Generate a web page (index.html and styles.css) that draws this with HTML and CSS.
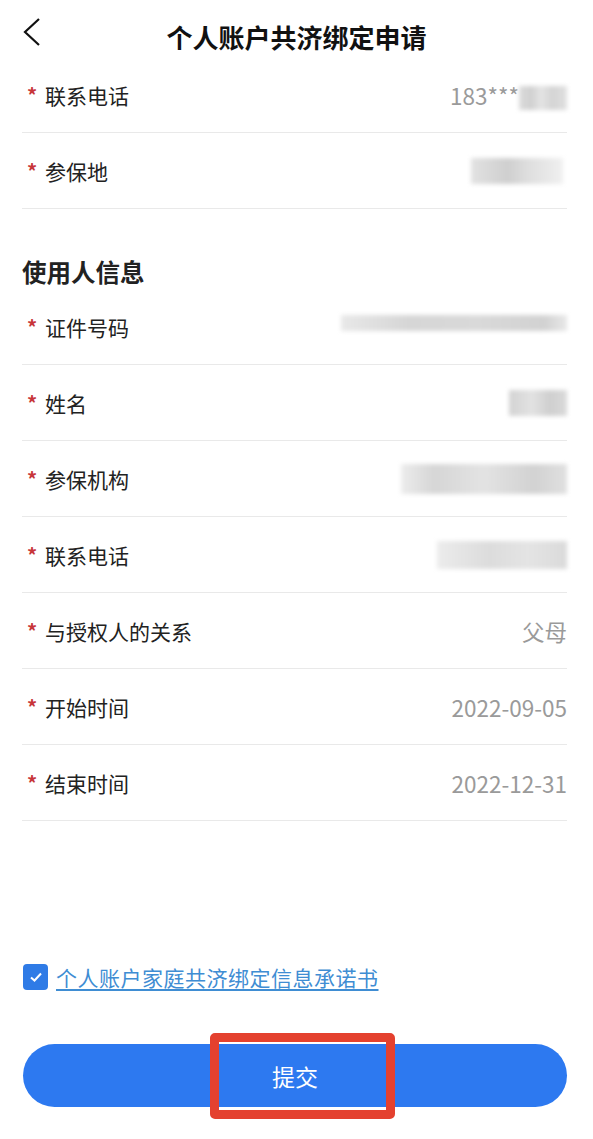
FILE: index.html
```html
<!DOCTYPE html>
<html lang="zh-CN">
<head>
    <meta charset="UTF-8">
    <meta name="viewport" content="width=device-width, initial-scale=1.0">
    <title>个人账户共济绑定申请</title>
    <link rel="stylesheet" href="styles.css">
</head>
<body>
    <div class="page">
        <div class="header">
            <svg class="back" width="20" height="30" viewBox="0 0 20 30">
                <path d="M17 2 L3 15 L17 28" fill="none" stroke="#111" stroke-width="2.2"/>
            </svg>
            <h1 class="title">个人账户共济绑定申请</h1>
        </div>

        <ul class="form">
            <li class="row">
                <span class="label"><i>*</i>联系电话</span>
                <span class="value">183***<b class="mosaic m-phone"></b></span>
            </li>
            <li class="row">
                <span class="label"><i>*</i>参保地</span>
                <span class="value"><b class="mosaic m-place"></b></span>
            </li>
        </ul>

        <h2 class="section">使用人信息</h2>

        <ul class="form">
            <li class="row">
                <span class="label"><i>*</i>证件号码</span>
                <span class="value"><b class="mosaic m-id"></b></span>
            </li>
            <li class="row">
                <span class="label"><i>*</i>姓名</span>
                <span class="value"><b class="mosaic m-name"></b></span>
            </li>
            <li class="row">
                <span class="label"><i>*</i>参保机构</span>
                <span class="value"><b class="mosaic m-org"></b></span>
            </li>
            <li class="row">
                <span class="label"><i>*</i>联系电话</span>
                <span class="value"><b class="mosaic m-tel"></b></span>
            </li>
            <li class="row">
                <span class="label"><i>*</i>与授权人的关系</span>
                <span class="value">父母</span>
            </li>
            <li class="row">
                <span class="label"><i>*</i>开始时间</span>
                <span class="value">2022-09-05</span>
            </li>
            <li class="row">
                <span class="label"><i>*</i>结束时间</span>
                <span class="value">2022-12-31</span>
            </li>
        </ul>

        <div class="agree">
            <span class="checkbox">
                <svg width="14" height="12" viewBox="0 0 14 12">
                    <path d="M2 6.5 L5.5 9.5 L12 2.5" fill="none" stroke="#fff" stroke-width="2"/>
                </svg>
            </span>
            <a class="agree-link" href="#">个人账户家庭共济绑定信息承诺书</a>
        </div>

        <div class="submit-wrap">
            <button class="submit">提交</button>
            <div class="mark"></div>
        </div>
    </div>
</body>
</html>
```

FILE: styles.css
```css
body {
    margin: 0;
    background: #fff;
    font-family: "Noto Sans CJK SC", "Noto Sans", sans-serif;
    color: #222;
}

.page {
    width: 593px;
    padding: 0 26px 32px 22px;
    box-sizing: border-box;
}

.header {
    position: relative;
    height: 57px;
    padding-top: 16px;
    box-sizing: border-box;
}

.back {
    position: absolute;
    left: 0;
    top: 17px;
}

.title {
    margin: 0;
    text-align: center;
    font-size: 26px;
    line-height: 41px;
    font-weight: bold;
    color: #111;
    margin-left: 4px;
}

ul.form {
    list-style: none;
    margin: 0;
    padding: 0;
}

.row {
    display: flex;
    align-items: center;
    justify-content: space-between;
    height: 75px;
    border-bottom: 1.5px solid #e9e9e9;
    padding-left: 5px;
}

.label {
    font-size: 21px;
    color: #222;
    display: flex;
    align-items: center;
}

.label i {
    font-style: normal;
    font-weight: bold;
    color: #c7363a;
    font-size: 20px;
    width: 18px;
    margin-top: -1px;
}

.value {
    font-size: 22.5px;
    color: #9a9a9a;
    display: flex;
    align-items: center;
}

.mosaic {
    display: inline-block;
    height: 24px;
    filter: blur(2px);
    background: linear-gradient(90deg, #dcdcdc 0%, #d0d0d0 25%, #e4e4e4 45%, #d4d4d4 70%, #e0e0e0 100%);
}

.m-phone { width: 48px; margin-top: 6px; }
.m-place { width: 92px; height: 26px; margin-right: 4px; background: linear-gradient(90deg, #e2e2e2, #cfcfcf 40%, #dddddd 60%, #f0f0f0); }
.m-id { width: 226px; height: 16px; margin-bottom: 8px; background: linear-gradient(90deg, #e8e8e8, #d6d6d6 30%, #d9d9d9 60%, #d2d2d2 90%, #e8e8e8); }
.m-name { width: 58px; height: 26px; background: linear-gradient(90deg, #d3d3d3, #e2e2e2 40%, #cfcfcf 70%, #dadada); }
.m-org { width: 166px; height: 30px; background: linear-gradient(90deg, #ececec, #d6d6d6 20%, #e3e3e3 50%, #d2d2d2 80%, #e0e0e0); }
.m-tel { width: 130px; height: 28px; background: linear-gradient(90deg, #ececec, #dcdcdc 40%, #e4e4e4 70%, #dadada); }

.section {
    margin: 0;
    padding-top: 46px;
    font-size: 24.5px;
    line-height: 34px;
    font-weight: bold;
    color: #222;
}

.agree {
    display: flex;
    align-items: center;
    margin-top: 143px;
    margin-left: 1px;
    height: 26px;
}

.checkbox {
    width: 25px;
    height: 26px;
    border-radius: 4px;
    background: #2f7be6;
    display: flex;
    align-items: center;
    justify-content: center;
    margin-right: 8px;
}

.agree-link {
    font-size: 21px;
    color: #3f8dd3;
    text-decoration: underline;
    text-underline-offset: 3px;
    letter-spacing: 0.5px;
}

.submit-wrap {
    position: relative;
    margin-top: 54px;
    margin-left: 1px;
}

.submit {
    display: block;
    width: 100%;
    height: 63px;
    border: none;
    border-radius: 32px;
    background: #2d79f0;
    color: #fff;
    font-family: inherit;
    font-size: 23px;
}

.mark {
    position: absolute;
    left: 187px;
    top: -11px;
    width: 185px;
    height: 86px;
    box-sizing: border-box;
    border: 9px solid #e4412f;
    border-radius: 5px;
    box-shadow: inset 0 2px 0 #fff, inset 0 -3px 0 #fff;
}
```
